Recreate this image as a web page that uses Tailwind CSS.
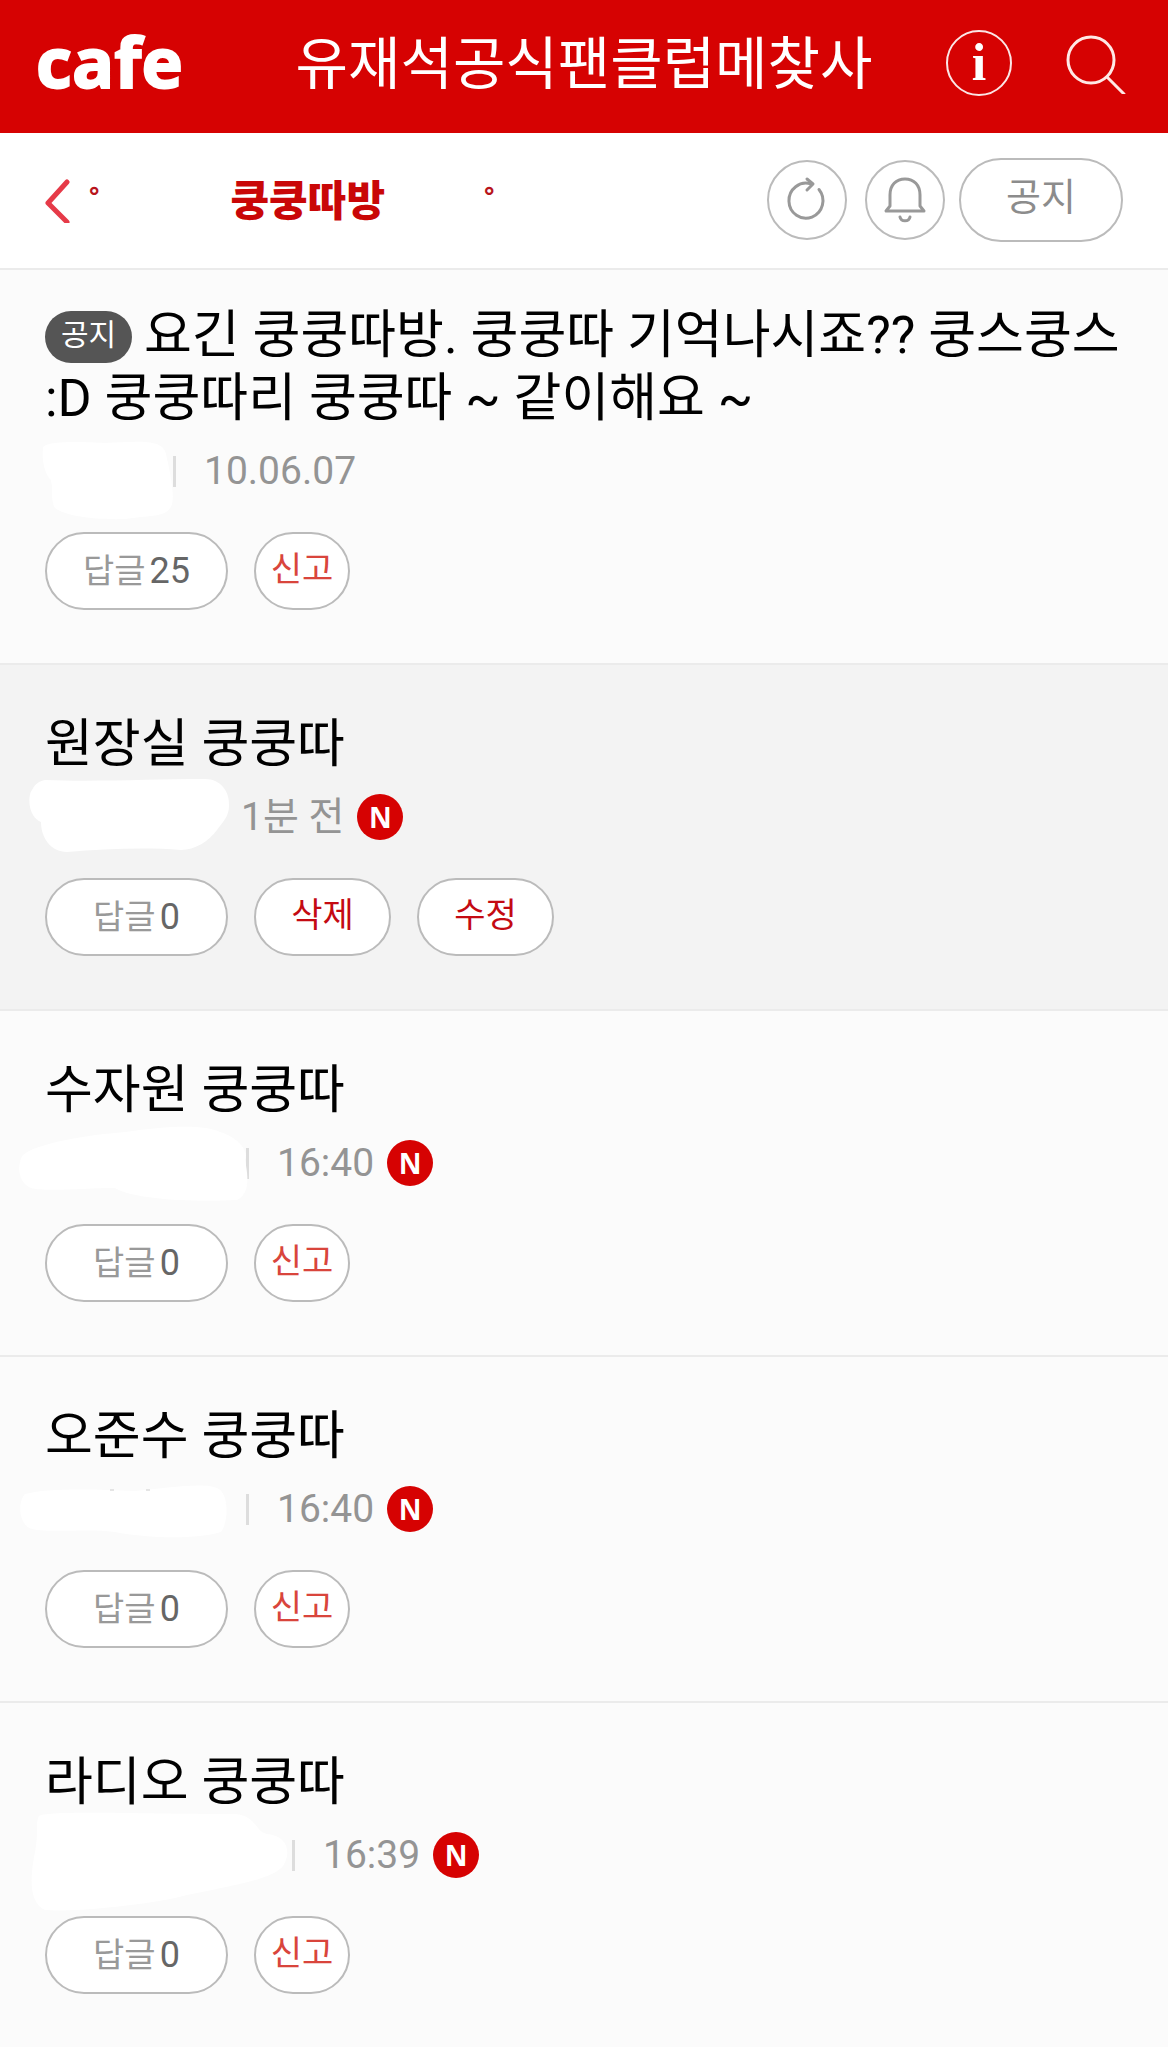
<!DOCTYPE html>
<html lang="ko">
<head>
  <meta charset="UTF-8">
  <meta name="viewport" content="width=device-width,initial-scale=1">
  <title>쿵쿵따방 - 유재석공식팬클럽메찾사</title>
  <script src="https://cdn.jsdelivr.net/npm/@tailwindcss/browser@4"></script>
</head>
<body class="bg-[#fbfbfb] text-black font-[Roboto,'Noto_Sans_CJK_KR',sans-serif]">

  <header class="grid grid-cols-[1fr_auto_1fr] items-center h-[133px] px-[36px] bg-[#d60202] text-white">
    <a href="#" class="font-['Open_Sans',sans-serif] font-bold text-[70px] leading-none pb-3 [-webkit-text-stroke:2px_white]">cafe</a>
    <h1 class="text-[57px] leading-[80px] pb-1 whitespace-nowrap">유재석공식팬클럽메찾사</h1>
    <div class="flex items-center justify-end gap-[54px] pr-1 pb-2">
      <button type="button" aria-label="카페 정보" class="flex items-center justify-center size-[66px] rounded-full border-2 border-white/90 font-['Liberation_Serif',serif] font-bold text-[52px] leading-none">i</button>
      <button type="button" aria-label="검색" class="size-[62px]">
        <svg viewBox="0 0 62 62" fill="none" stroke="#ffe9e6" stroke-width="3" stroke-linecap="round">
          <circle cx="25" cy="28" r="23"/>
          <path d="M41 45 58 62"/>
        </svg>
      </button>
    </div>
  </header>

  <nav class="flex items-center h-[135px] pl-[44px] pr-[45px] pb-0.5 bg-white">
    <a href="#" aria-label="뒤로">
      <svg class="w-7 h-[46px]" viewBox="0 0 28 46" fill="none" stroke="#e63a48" stroke-width="5" stroke-linecap="round" stroke-linejoin="round">
        <path d="M23 5 4 26 23 45"/>
      </svg>
    </a>
    <h2 class="flex items-center ml-4 pt-1 font-bold text-[42px] leading-[60px] text-[#c90707]">
      <span class="text-[32px] leading-[24px] pb-2 text-[#b8141c]">°</span>
      <span class="mx-[98px] pl-8 font-black">쿵쿵따방</span>
      <span class="text-[32px] leading-[24px] pb-2 text-[#b8141c]">°</span>
    </h2>
    <div class="flex items-center gap-[18px] ml-auto mr-[14px]">
      <button type="button" aria-label="새로고침" class="flex items-center justify-center size-20 rounded-full border-2 border-[#bbb]">
        <svg class="size-12" viewBox="0 0 48 48" fill="none" stroke="#999" stroke-width="3" stroke-linecap="round" stroke-linejoin="round">
          <path d="M36 13.5A17 17.5 0 1 1 28 8"/>
          <path d="M24 3 30 8 24 14"/>
        </svg>
      </button>
      <button type="button" aria-label="알림" class="flex items-center justify-center size-20 rounded-full border-2 border-[#bbb]">
        <svg class="size-12" viewBox="0 0 48 48" fill="none" stroke="#999" stroke-width="3" stroke-linecap="round" stroke-linejoin="round">
          <path d="M5 35H43L39 30V19C39 9 33 3 24 3S9 9 9 19V30Z"/>
          <path d="M19 41C20 46 28 46 29 41"/>
        </svg>
      </button>
    </div>
    <button type="button" class="w-[164px] h-[84px] pb-1 rounded-full border-2 border-[#bbb] text-[38px] text-[#8c8c8c]">공지</button>
  </nav>

  <main>
    <article class="border-t-2 border-[#ebebeb] px-[45px] pt-[34px] pb-[53px]">
      <h3 class="-mr-4 text-[52px] leading-[63px]"><span class="inline-flex items-center justify-center w-[87px] h-[52px] pb-1 mr-3 rounded-full bg-[#555] text-white text-[30px] leading-none align-[8px]">공지</span>요긴 쿵쿵따방. 쿵쿵따 기억나시죠?? 쿵스쿵스 :D 쿵쿵따리 쿵쿵따 ~ 같이해요 ~</h3>
      <div class="flex items-center h-[46px] mt-[18px] text-[39px] text-[#949494]">
        <div class="relative w-32 h-full">
          <svg class="absolute left-0 top-0 size-full overflow-visible" fill="#fff">
            <path d="M-2 0C0-8 40-6 60-5C90-6 118-10 121 6C124 20 130 45 127 56C123 70 105 67 80 71C50 72 20 68 10 60C4 50 10 35 4 30C-2 20-3 10-2 0Z"/>
          </svg>
        </div>
        <span class="w-[3px] h-[31px] bg-[#ddd]"></span>
        <time class="ml-7">10.06.07</time>
      </div>
      <div class="flex gap-[26px] mt-[38px] text-[34px]">
        <button type="button" class="flex items-center justify-center gap-1 w-[183px] h-[78px] rounded-full border-2 border-[#bbb] bg-white text-[#999]">답글<span class="text-4xl text-[#666]">25</span></button>
        <button type="button" class="w-24 h-[78px] pb-1 rounded-full border-2 border-[#bbb] bg-white text-[#d9453c] whitespace-nowrap">신고</button>
      </div>
    </article>

    <article class="border-t-2 border-[#ebebeb] bg-[#f3f3f3] px-[45px] pt-12 pb-[53px]">
      <h3 class="text-[52px] leading-[63px]">원장실 쿵쿵따</h3>
      <div class="flex items-center h-[46px] mt-[18px] text-[39px] text-[#949494]">
        <div class="relative w-[196px] h-full">
          <svg class="absolute left-0 top-0 size-full overflow-visible" fill="#fff">
            <path d="M0-14C50-12 110-15 160-15C176-15 185-2 184 12C184 22 178 28 172 36C164 47 150 56 136 56C100 53 60 55 22 58C6 58-4 44-4 28C-18 22-17 0-13-4C-10-10-6-13 0-14Z"/>
          </svg>
        </div>
        <time>1분 전</time>
        <span class="flex items-center justify-center size-[46px] ml-[13px] rounded-full bg-[#d60202] text-white font-['Open_Sans',sans-serif] font-bold text-[28px] leading-none">N</span>
      </div>
      <div class="flex gap-[26px] mt-[38px] text-[34px]">
        <button type="button" class="flex items-center justify-center gap-1 w-[183px] h-[78px] rounded-full border-2 border-[#bbb] bg-white text-[#999]">답글<span class="text-4xl text-[#666]">0</span></button>
        <button type="button" class="w-[137px] h-[78px] pb-1 rounded-full border-2 border-[#bbb] bg-white text-[#c40a12] whitespace-nowrap">삭제</button>
        <button type="button" class="w-[137px] h-[78px] pb-1 rounded-full border-2 border-[#bbb] bg-white text-[#c40a12] whitespace-nowrap">수정</button>
      </div>
    </article>

    <article class="border-t-2 border-[#ebebeb] px-[45px] pt-12 pb-[53px]">
      <h3 class="text-[52px] leading-[63px]">수자원 쿵쿵따</h3>
      <div class="flex items-center h-[46px] mt-[18px] text-[39px] text-[#949494]">
        <div class="relative w-[201px] h-full">
          <svg class="absolute left-0 top-0 z-10 size-full overflow-visible" fill="#fff">
            <path d="M-22 15C-10 4 40-5 80-8C120-14 160-16 175-8C190-4 205 10 200 20C204 40 204 54 192 60C150 62 90 60 70 48C40 48 0 52-14 48C-28 42-28 24-22 15Z"/>
          </svg>
        </div>
        <span class="w-[3px] h-[31px] bg-[#ddd]"></span>
        <time class="ml-7">16:40</time>
        <span class="flex items-center justify-center size-[46px] ml-[13px] rounded-full bg-[#d60202] text-white font-['Open_Sans',sans-serif] font-bold text-[28px] leading-none">N</span>
      </div>
      <div class="flex gap-[26px] mt-[38px] text-[34px]">
        <button type="button" class="flex items-center justify-center gap-1 w-[183px] h-[78px] rounded-full border-2 border-[#bbb] bg-white text-[#999]">답글<span class="text-4xl text-[#666]">0</span></button>
        <button type="button" class="w-24 h-[78px] pb-1 rounded-full border-2 border-[#bbb] bg-white text-[#d9453c] whitespace-nowrap">신고</button>
      </div>
    </article>

    <article class="border-t-2 border-[#ebebeb] px-[45px] pt-12 pb-[53px]">
      <h3 class="text-[52px] leading-[63px]">오준수 쿵쿵따</h3>
      <div class="flex items-center h-[46px] mt-[18px] text-[39px] text-[#949494]">
        <div class="relative w-[201px] h-full">
          <svg class="absolute left-0 top-0 size-full overflow-visible" fill="#fff">
            <path d="M-20 8C0 2 50 3 90 5C120 2 160-4 172 2C184 6 184 36 176 46C150 54 100 52 70 46C40 42 0 48-16 42C-28 34-26 14-20 8Z"/>
            <path d="M65 4H69M101 4H105" stroke="#ccc"/>
          </svg>
        </div>
        <span class="w-[3px] h-[31px] bg-[#ddd]"></span>
        <time class="ml-7">16:40</time>
        <span class="flex items-center justify-center size-[46px] ml-[13px] rounded-full bg-[#d60202] text-white font-['Open_Sans',sans-serif] font-bold text-[28px] leading-none">N</span>
      </div>
      <div class="flex gap-[26px] mt-[38px] text-[34px]">
        <button type="button" class="flex items-center justify-center gap-1 w-[183px] h-[78px] rounded-full border-2 border-[#bbb] bg-white text-[#999]">답글<span class="text-4xl text-[#666]">0</span></button>
        <button type="button" class="w-24 h-[78px] pb-1 rounded-full border-2 border-[#bbb] bg-white text-[#d9453c] whitespace-nowrap">신고</button>
      </div>
    </article>

    <article class="border-t-2 border-[#ebebeb] px-[45px] pt-12 pb-[53px]">
      <h3 class="text-[52px] leading-[63px]">라디오 쿵쿵따</h3>
      <div class="flex items-center h-[46px] mt-[18px] text-[39px] text-[#949494]">
        <div class="relative w-[247px] h-full">
          <svg class="absolute left-0 top-0 size-full overflow-visible" fill="#fff">
            <path d="M-6-16C0-22 100-18 190-18C212-16 210 0 222 2C244 4 246 22 238 34C225 50 170 56 130 66C80 76 20 80 0 78C-18 70-14 40-10 20C-6 0-10-10-6-16Z"/>
          </svg>
        </div>
        <span class="w-[3px] h-[31px] bg-[#ddd]"></span>
        <time class="ml-7">16:39</time>
        <span class="flex items-center justify-center size-[46px] ml-[13px] rounded-full bg-[#d60202] text-white font-['Open_Sans',sans-serif] font-bold text-[28px] leading-none">N</span>
      </div>
      <div class="flex gap-[26px] mt-[38px] text-[34px]">
        <button type="button" class="flex items-center justify-center gap-1 w-[183px] h-[78px] rounded-full border-2 border-[#bbb] bg-white text-[#999]">답글<span class="text-4xl text-[#666]">0</span></button>
        <button type="button" class="w-24 h-[78px] pb-1 rounded-full border-2 border-[#bbb] bg-white text-[#d9453c] whitespace-nowrap">신고</button>
      </div>
    </article>
  </main>

</body>
</html>
